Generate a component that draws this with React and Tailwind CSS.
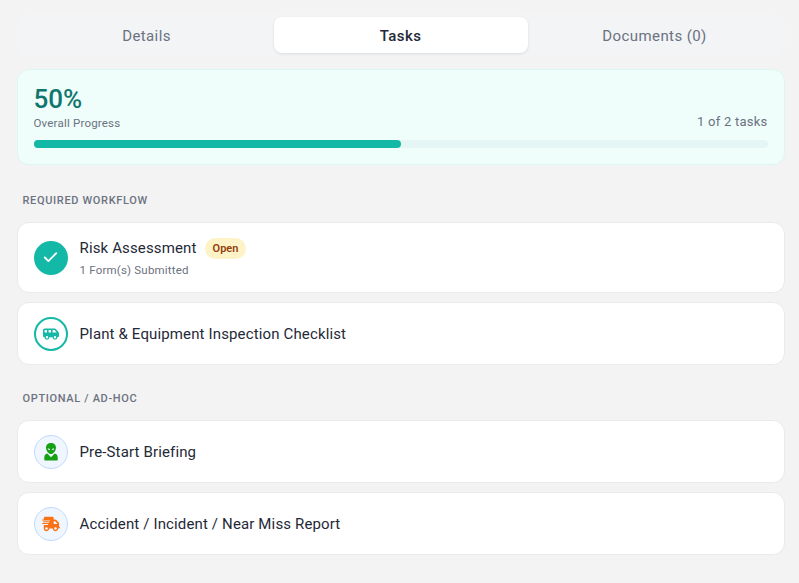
import { Check } from 'lucide-react';
import { FaTruckFast, FaVanShuttle } from 'react-icons/fa6';

function AlienIcon() {
  return (
    <svg viewBox="0 0 16 18" className="h-[18px] w-4 text-[#15a015]" fill="currentColor">
      <path fillRule="evenodd" d="M8 0C4.900 0 3 2.100 3 4.700 3 7.400 5.600 11 8 11s5-3.600 5-6.300C13 2.100 11.100 0 8 0ZM4.700 5.200c1.400 0 2.400.8 2.500 2-1.400 0-2.400-.8-2.500-2Zm6.600 0c-.1 1.200-1.100 2-2.500 2 .1-1.200 1.100-2 2.500-2Z" />
      <path d="M4.300 10.500C2.400 11 1.300 12.300 1.300 14.300V17c0 .3.200.5.500.5h12.400c.3 0 .5-.2.500-.5v-2.700c0-2-1.100-3.300-3-3.800L8 14.200 4.300 10.500Z" />
    </svg>
  );
}

function Section({ title, children }) {
  return (
    <section>
      <h2 className="mb-[14px] px-1.5 text-[11px] leading-[14px] font-medium tracking-[0.66px] text-[#6b7280] uppercase">{title}</h2>
      <div className="flex flex-col gap-[9px]">{children}</div>
    </section>
  );
}

function TaskRow({ icon, title, badge, sub }) {
  return (
    <div className={`flex items-center gap-3 rounded-xl border border-[#e8eaed] bg-white px-4 ${sub ? 'py-[14.5px]' : 'py-[13.5px]'}`}>
      {icon}
      <div>
        <div className="flex items-center gap-2">
          <span className="text-[15px] leading-5 tracking-[0.14px] text-[#1f2937]">{title}</span>
          {badge && (
            <span className="rounded-full bg-[#fef3c7] px-2 py-[3px] text-[11px] leading-[15px] font-semibold text-[#92400e]">{badge}</span>
          )}
        </div>
        {sub && <div className="mt-[3px] text-[11.5px] leading-4 tracking-[0.2px] text-[#6b7280]">{sub}</div>}
      </div>
    </div>
  );
}

export default function App() {
  return (
    <main className="flex h-[583px] w-full flex-col overflow-hidden bg-[#f3f3f3] pt-[14px] pr-[14.5px] pl-[16.5px] font-['Roboto',sans-serif]">
      {/* Tabs */}
      <div className="grid grid-cols-3 rounded-xl bg-[#f3f4f6] p-[3px] text-[15px] tracking-[0.4px]">
        <button className="h-9 pt-[3px] text-[#6b7280]">Details</button>
        <button className="h-9 rounded-lg bg-white pt-[3px] font-medium text-[#1f2937] shadow-[0_1px_3px_rgba(0,0,0,0.1)]">Tasks</button>
        <button className="h-9 pt-[3px] text-[#6b7280]">Documents (0)</button>
      </div>

      {/* Progress */}
      <div className="mt-[13px] rounded-xl border border-[#dcf7f1] bg-[#effdfb] px-4 pt-[13px] pb-[16px]">
        <div className="flex items-end justify-between">
          <div>
            <div className="text-[26px] leading-[32px] font-medium text-[#0f766e]">50%</div>
            <div className="text-[11.5px] leading-4 tracking-[0.2px] text-[#6b7280]">Overall Progress</div>
          </div>
          <div className="text-[13px] leading-[18px] tracking-[0.25px] text-[#6b7280]">1 of 2 tasks</div>
        </div>
        <div className="mt-[9px] h-2 rounded-full bg-[#e6f6f4]">
          <div className="h-full w-1/2 rounded-full bg-[#14b8a6]"></div>
        </div>
      </div>

      <div className="mt-[29px]">
        <Section title="Required Workflow">
          <TaskRow
            title="Risk Assessment"
            badge="Open"
            sub="1 Form(s) Submitted"
            icon={
              <div className="flex h-[34px] w-[34px] items-center justify-center rounded-full bg-[#14b8a6] text-white">
                <Check size={17} strokeWidth={2.5} />
              </div>
            }
          />
          <TaskRow
            title="Plant & Equipment Inspection Checklist"
            icon={
              <div className="flex h-[34px] w-[34px] items-center justify-center rounded-full border-2 border-[#14b8a6] bg-white text-[#14b8a6]">
                <FaVanShuttle size={16} />
              </div>
            }
          />
        </Section>
      </div>

      <div className="mt-[27px]">
        <Section title="Optional / Ad-hoc">
          <TaskRow
            title="Pre-Start Briefing"
            icon={
              <div className="flex h-[34px] w-[34px] items-center justify-center rounded-full border border-[#bfdbfe] bg-[#eff6ff]">
                <AlienIcon />
              </div>
            }
          />
          <TaskRow
            title="Accident / Incident / Near Miss Report"
            icon={
              <div className="flex h-[34px] w-[34px] items-center justify-center rounded-full border border-[#bfdbfe] bg-[#eff6ff] text-[#f97316]">
                <FaTruckFast size={18} />
              </div>
            }
          />
        </Section>
      </div>
    </main>
  );
}
